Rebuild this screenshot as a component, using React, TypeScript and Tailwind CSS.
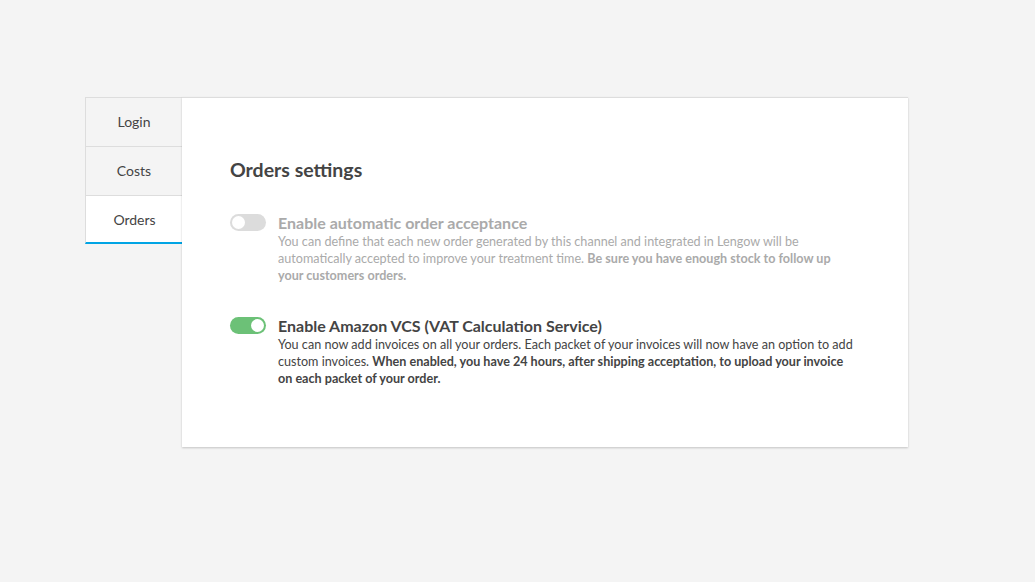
import React from "react";

function Toggle({ on }: { on: boolean }) {
  return (
    <div
      className={`relative mt-[1px] h-[17px] w-[36px] shrink-0 rounded-full ${on ? "bg-[#6cc177]" : "bg-[#dcdcdc]"}`}
    >
      <div
        className={`absolute top-[2px] h-[13px] w-[13px] rounded-full bg-white ${on ? "left-[21px]" : "left-[2px]"}`}
      />
    </div>
  );
}

export default function App() {
  return (
    <div
      className="min-h-[582px] w-full bg-[#f4f4f4] pt-[97px] pl-[85px]"
      style={{ fontFamily: "Lato, 'Open Sans', sans-serif" }}
    >
      <div className="flex w-[823px]">
        <div className="flex w-[97px] shrink-0 flex-col">
          <div className="flex h-[49px] items-center justify-center border-t border-l border-[#dddddd] bg-[#f4f4f4] pb-[1px] text-[14px] text-[#444]">
            Login
          </div>
          <div className="flex h-[49px] items-center justify-center border-t border-l border-[#dddddd] bg-[#f4f4f4] pb-[1px] text-[14px] text-[#444]">
            Costs
          </div>
          <div className="flex h-[49px] w-[98px] items-center justify-center border-t border-l border-b-2 border-[#dddddd] border-b-[#00a4e4] bg-white text-[14px] text-[#444]">
            Orders
          </div>
        </div>
        <div className="h-[350px] flex-1 border-t border-[#dddddd] bg-white pl-[48px] pr-[52px] shadow-[0_1px_2px_rgba(0,0,0,0.2)]">
          <h2 className="mt-[59px] text-[19.5px] font-bold leading-[26px] text-[#444]">Orders settings</h2>
          <div className="mt-[30px] flex gap-[12px]">
            <Toggle on={false} />
            <div>
              <div className="text-[16px] font-bold leading-[20px] text-[#aaaaaa]">
                Enable automatic order acceptance
              </div>
              <p className="text-[12.6px] leading-[17px] text-[#aaaaaa]">
                You can define that each new order generated by this channel and integrated in Lengow will be
                automatically accepted to improve your treatment time.{" "}
                <b className="font-bold">Be sure you have enough stock to follow up your customers orders.</b>
              </p>
            </div>
          </div>
          <div className="mt-[32px] flex gap-[12px]">
            <Toggle on={true} />
            <div>
              <div className="text-[16px] font-bold leading-[20px] text-[#444]">
                Enable Amazon VCS (VAT Calculation Service)
              </div>
              <p className="text-[12.6px] leading-[17px] text-[#444]">
                You can now add invoices on all your orders. Each packet of your invoices will now have an option to add
                custom invoices.{" "}
                <b className="font-bold">
                  When enabled, you have 24 hours, after shipping acceptation, to upload your invoice on each packet of
                  your order.
                </b>
              </p>
            </div>
          </div>
        </div>
      </div>
    </div>
  );
}
